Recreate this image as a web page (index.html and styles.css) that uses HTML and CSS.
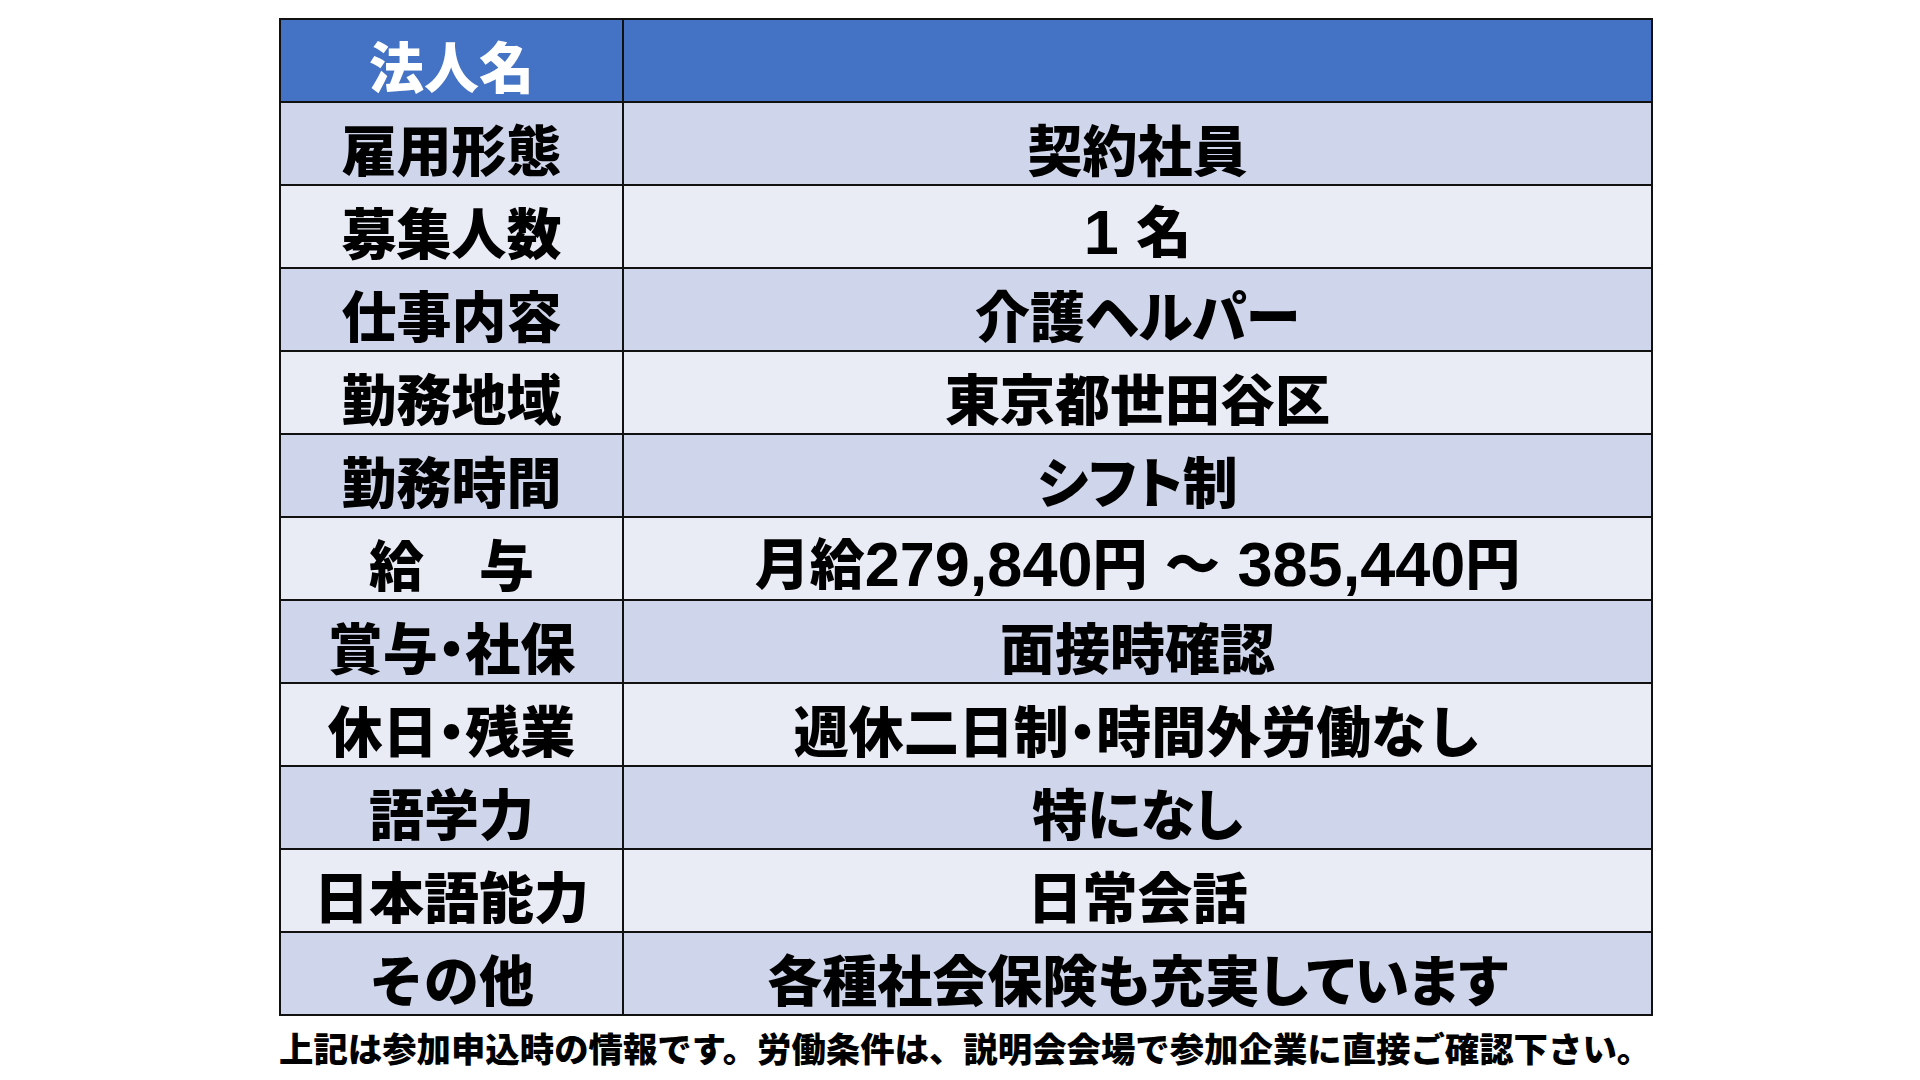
FILE: index.html
```html
<!DOCTYPE html>
<html lang="ja">
<head>
<meta charset="utf-8">
<title>求人情報</title>
<link rel="stylesheet" href="styles.css">
</head>
<body>
<main class="page">
  <table class="job">
    <colgroup><col class="c-label"><col class="c-value"></colgroup>
    <tr class="head"><td class="label">法人名</td><td class="value"></td></tr>
    <tr class="dark"><td class="label">雇用形態</td><td class="value">契約社員</td></tr>
    <tr class="light"><td class="label">募集人数</td><td class="value"><span class="num">1 </span>名</td></tr>
    <tr class="dark"><td class="label">仕事内容</td><td class="value prop">介護ヘルパー</td></tr>
    <tr class="light"><td class="label">勤務地域</td><td class="value">東京都世田谷区</td></tr>
    <tr class="dark"><td class="label">勤務時間</td><td class="value prop">シフト制</td></tr>
    <tr class="light"><td class="label">給　与</td><td class="value">月給<span class="num">279,840</span>円<span class="num"> </span>～<span class="num"> 385,440</span>円</td></tr>
    <tr class="dark"><td class="label">賞与<span class="mid">・</span>社保</td><td class="value">面接時確認</td></tr>
    <tr class="light"><td class="label">休日<span class="mid">・</span>残業</td><td class="value">週休二日制<span class="mid">・</span>時間外労働なし</td></tr>
    <tr class="dark"><td class="label">語学力</td><td class="value prop">特になし</td></tr>
    <tr class="light"><td class="label">日本語能力</td><td class="value">日常会話</td></tr>
    <tr class="dark"><td class="label">その他</td><td class="value prop">各種社会保険も充実しています</td></tr>
  </table>
  <p class="note">上記は参加申込時の情報です。労働条件は、説明会会場で参加企業に直接ご確認下さい。</p>
</main>
</body>
</html>
```
FILE: styles.css
```css
html, body {
  margin: 0;
  padding: 0;
  background: #ffffff;
}

body {
  font-family: "Noto Sans CJK JP", "Noto Sans CJK SC", sans-serif;
  color: #000000;
}

.page {
  padding: 18px 0 0 279px;
}

.job {
  border-collapse: collapse;
  table-layout: fixed;
  width: 1372px;
  border: 2px solid #111;
}

.c-label { width: 343px; }
.c-value { width: 1029px; }

.job tr { height: 83px; }

.job td {
  border: 2px solid #111;
  padding: 7px 0 0 0;
  text-align: center;
  vertical-align: middle;
  font-size: 55px;
  font-weight: 900;
  line-height: 1;
  white-space: nowrap;
}

.head td { background: #4472c4; color: #ffffff; }
.dark td { background: #cfd5ea; }
.light td { background: #e9ebf5; }

.prop {
  font-feature-settings: "palt";
}

.num {
  font-family: "Liberation Sans", Arial, sans-serif;
  font-weight: 700;
  font-size: 63px;
  position: relative;
  top: 2px;
}

.mid {
  font-feature-settings: "halt";
}

.note {
  margin: 11px 0 0 0;
  font-size: 34.4px;
  font-weight: 900;
  line-height: 1.2;
  white-space: nowrap;
}
```
